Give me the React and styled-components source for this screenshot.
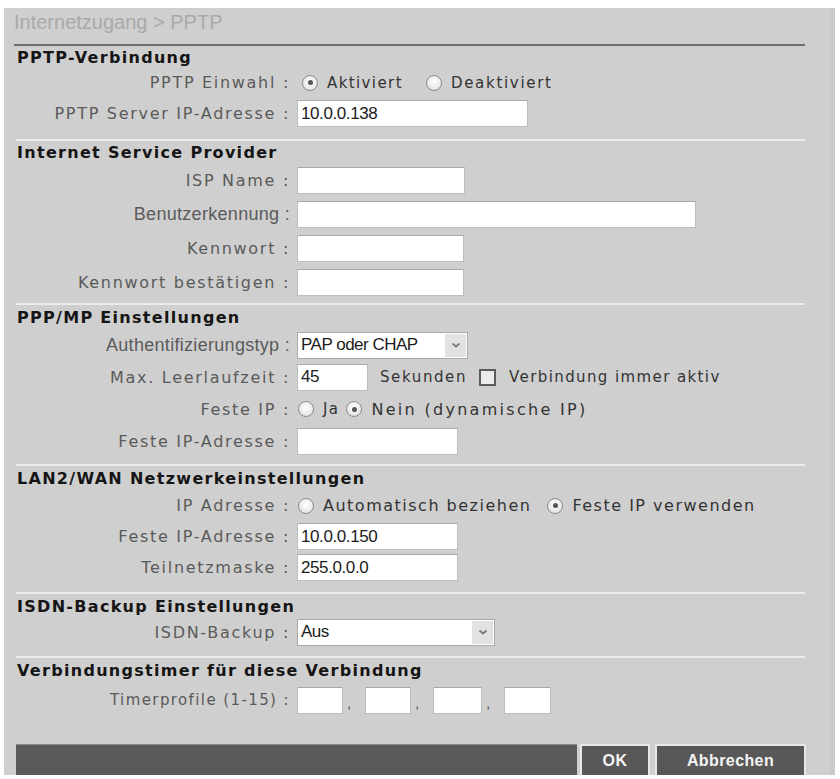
import React from "react";
import styled, { createGlobalStyle } from "styled-components";

const Global = createGlobalStyle`
  body {
    margin: 0;
    background: #fff;
  }
`;

function App() {
  return (
    <>
      <Global />
      <Panel>
        <Crumb>Internetzugang &gt; PPTP</Crumb>

        <Section $pt={3} $pb={10} $rowH={31} $headH={18}>
          <Heading>PPTP-Verbindung</Heading>
          <Row>
            <Label>PPTP Einwahl :</Label>
            <Field>
              <Radio $checked $ml={5} />
              <Option $after={20}>Aktiviert</Option>
              <Radio />
              <Option $ls={1.7}>Deaktiviert</Option>
            </Field>
          </Row>
          <Row>
            <Label>PPTP Server IP-Adresse :</Label>
            <Field>
              <Input $w={231} defaultValue="10.0.0.138" />
            </Field>
          </Row>
        </Section>

        <Section $rowH={34} $headH={20} $pb={4}>
          <Heading>Internet Service Provider</Heading>
          <Row>
            <Label>ISP Name :</Label>
            <Field><Input $w={168} /></Field>
          </Row>
          <Row>
            <Label $kind="narrow">Benutzerkennung :</Label>
            <Field><Input $w={399} /></Field>
          </Row>
          <Row>
            <Label>Kennwort :</Label>
            <Field><Input $w={167} type="password" /></Field>
          </Row>
          <Row>
            <Label>Kennwort bestätigen :</Label>
            <Field><Input $w={167} type="password" /></Field>
          </Row>
        </Section>

        <Section $rowH={32} $pb={7}>
          <Heading>PPP/MP Einstellungen</Heading>
          <Row>
            <Label $kind="narrow">Authentifizierungstyp :</Label>
            <Field>
              <Select $w={171}>
                <span>PAP oder CHAP</span>
                <Arrow />
              </Select>
            </Field>
          </Row>
          <Row>
            <Label>Max. Leerlaufzeit :</Label>
            <Field>
              <Input $w={71} defaultValue="45" />
              <Option $before={12} $ls={1.6}>Sekunden</Option>
              <Check />
              <Option>Verbindung immer aktiv</Option>
            </Field>
          </Row>
          <Row>
            <Label>Feste IP :</Label>
            <Field>
              <Radio $ml={1} />
              <Option $after={7}>Ja</Option>
              <Radio $ml={0} $checked />
              <Option $size={16} $ls={2.3}>Nein (dynamische IP)</Option>
            </Field>
          </Row>
          <Row>
            <Label>Feste IP-Adresse :</Label>
            <Field><Input $w={161} /></Field>
          </Row>
        </Section>

        <Section $rowH={31} $pb={9}>
          <Heading>LAN2/WAN Netzwerkeinstellungen</Heading>
          <Row>
            <Label>IP Adresse :</Label>
            <Field>
              <Radio $ml={1} />
              <Option $size={16} $ls={1.5} $after={13}>Automatisch beziehen</Option>
              <Radio $checked />
              <Option $size={16} $ls={1.5}>Feste IP verwenden</Option>
            </Field>
          </Row>
          <Row>
            <Label>Feste IP-Adresse :</Label>
            <Field><Input $w={161} defaultValue="10.0.0.150" /></Field>
          </Row>
          <Row>
            <Label>Teilnetzmaske :</Label>
            <Field><Input $w={161} defaultValue="255.0.0.0" /></Field>
          </Row>
        </Section>

        <Section $rowH={28} $pb={10}>
          <Heading>ISDN-Backup Einstellungen</Heading>
          <Row>
            <Label>ISDN-Backup :</Label>
            <Field>
              <Select $w={198}>
                <span>Aus</span>
                <Arrow />
              </Select>
            </Field>
          </Row>
        </Section>

        <Section $last $rowH={36}>
          <Heading>Verbindungstimer für diese Verbindung</Heading>
          <Row>
            <Label $kind="small">Timerprofile (1-15) :</Label>
            <Field>
              <Input $w={46} />
              <Comma>,</Comma>
              <Input $w={46} />
              <Comma>,</Comma>
              <Input $w={49} />
              <Comma>,</Comma>
              <Input $w={47} />
            </Field>
          </Row>
        </Section>

        <Bar>
          <Filler />
          <Button>OK</Button>
          <Button $wide>Abbrechen</Button>
        </Bar>
      </Panel>
    </>
  );
}

function Arrow() {
  return (
    <ArrowBox>
      <svg width="10" height="8" viewBox="0 0 10 8">
        <path d="M1.5 2.5 L5 5.5 L8.5 2.5" fill="none" stroke="#7a7a7a" strokeWidth="1.8" />
      </svg>
    </ArrowBox>
  );
}

const Panel = styled.div`
  box-sizing: border-box;
  width: 831px;
  height: 767px;
  margin: 8px 0 0 4px;
  padding: 0 25px 0 12px;
  background: #cfcfcf;
  border-right: 5px solid #c9c9c9;
  display: flex;
  flex-direction: column;
`;

const Crumb = styled.div`
  height: 36px;
  margin-left: -2px;
  border-bottom: 2px solid #6e6e6e;
  font-family: "Liberation Sans", Arial, sans-serif;
  font-size: 20px;
  line-height: 28px;
  color: #a9a9a9;
`;

const Section = styled.div`
  --row-h: ${(p) => p.$rowH || 33}px;
  --head-h: ${(p) => p.$headH || 22}px;
  padding: ${(p) => p.$pt ?? 2}px 0 ${(p) => p.$pb ?? 6}px;
  border-bottom: ${(p) => (p.$last ? "none" : "2px solid #ececec")};
`;

const Heading = styled.div`
  height: var(--head-h);
  line-height: var(--head-h);
  padding-left: 1px;
  font-family: "DejaVu Sans", Verdana, sans-serif;
  font-weight: bold;
  font-size: 16px;
  letter-spacing: 1.3px;
  color: #151515;
  white-space: nowrap;
`;

const Row = styled.div`
  display: grid;
  grid-template-columns: 274px 1fr;
  column-gap: 7px;
  align-items: center;
  height: var(--row-h);
`;

const labelFonts = {
  regular: `
    font-family: "DejaVu Sans", Verdana, sans-serif;
    font-size: 16px;
    letter-spacing: 1.7px;
  `,
  small: `
    font-family: "DejaVu Sans", Verdana, sans-serif;
    font-size: 15px;
    letter-spacing: 1.4px;
  `,
  narrow: `
    font-family: "Liberation Sans", Arial, sans-serif;
    font-size: 18px;
    letter-spacing: 0.3px;
  `,
};

const Label = styled.div`
  text-align: right;
  color: #5a5a5a;
  white-space: nowrap;
  ${(p) => labelFonts[p.$kind || "regular"]}
`;

const Field = styled.div`
  display: flex;
  align-items: center;
`;

const Input = styled.input`
  box-sizing: border-box;
  width: ${(p) => p.$w}px;
  height: 27px;
  border: 1px solid #bdbdbd;
  border-top-color: #a8a8a8;
  background: #fff;
  padding: 0 3px;
  font-family: "Liberation Sans", Arial, sans-serif;
  font-size: 17px;
  letter-spacing: -0.4px;
  color: #1c1c1c;
  outline: none;
`;

const Select = styled.div`
  box-sizing: border-box;
  width: ${(p) => p.$w}px;
  height: 27px;
  display: flex;
  align-items: center;
  justify-content: space-between;
  border: 1px solid #a9a9a9;
  background: #fff;
  padding-left: 3px;
  font-family: "Liberation Sans", Arial, sans-serif;
  font-size: 17px;
  letter-spacing: -0.5px;
  color: #1c1c1c;
`;

const ArrowBox = styled.span`
  width: 21px;
  height: 23px;
  margin-right: 1px;
  background: #e2e2e2;
  display: flex;
  align-items: center;
  justify-content: center;
`;

const Radio = styled.span`
  box-sizing: border-box;
  flex: none;
  width: 16px;
  height: 16px;
  margin: 0 9px 0 ${(p) => p.$ml ?? 3}px;
  border-radius: 50%;
  border: 1px solid #8c8c8c;
  background: radial-gradient(circle at 50% 40%, #ffffff 0%, #e6e6e6 70%, #d0d0d0 100%);
  display: flex;
  align-items: center;
  justify-content: center;

  &::after {
    content: "";
    width: 5px;
    height: 5px;
    border-radius: 50%;
    background: ${(p) => (p.$checked ? "#555" : "transparent")};
  }
`;

const Check = styled.span`
  box-sizing: border-box;
  flex: none;
  width: 17px;
  height: 17px;
  margin: 0 13px 0 12px;
  border: 2px solid #5c5c5c;
  background: #ececec;
`;

const Option = styled.span`
  margin-left: ${(p) => p.$before || 0}px;
  margin-right: ${(p) => p.$after || 0}px;
  font-family: "DejaVu Sans", Verdana, sans-serif;
  font-size: ${(p) => p.$size || 15}px;
  letter-spacing: ${(p) => p.$ls ?? 1.4}px;
  color: #333;
  white-space: nowrap;
`;

const Comma = styled.span`
  box-sizing: border-box;
  width: 22px;
  padding: 0 0 3px 4px;
  align-self: flex-end;
  font-family: "Liberation Sans", Arial, sans-serif;
  font-size: 15px;
  color: #555;
`;

const Bar = styled.div`
  margin-top: auto;
  height: 31px;
  width: 790px;
  display: flex;
`;

const Filler = styled.div`
  flex: 1;
  background: #5a5a5a;
  border-top: 1px solid #8a8a8a;
`;

const Button = styled.div`
  box-sizing: border-box;
  width: ${(p) => (p.$wide ? 151 : 70)}px;
  margin-left: ${(p) => (p.$wide ? 5 : 3)}px;
  border: 2px solid #e8e8e8;
  border-bottom: none;
  background: #585858;
  color: #f4f4f4;
  font-family: "Liberation Sans", Arial, sans-serif;
  font-weight: bold;
  font-size: 16px;
  letter-spacing: 0.4px;
  display: flex;
  align-items: center;
  justify-content: center;
`;

export default App;
